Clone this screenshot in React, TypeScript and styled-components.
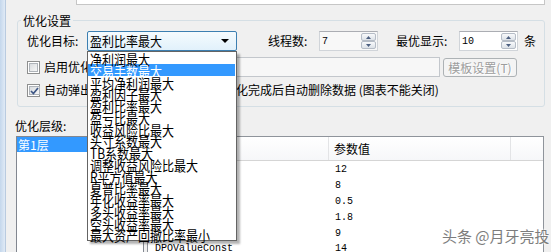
import React from 'react';
import styled, { createGlobalStyle } from 'styled-components';

const Global = createGlobalStyle`
  html, body { margin: 0; padding: 0; background: #f0f0f0; }
  body {
    font-family: "Noto Sans CJK SC", "Noto Sans", sans-serif;
    font-size: 12px;
    color: #000;
  }
  #root { width: 551px; height: 252px; }
`;

const Window = styled.div`
  position: relative;
  width: 551px;
  height: 252px;
  overflow: hidden;
  display: flex;
  background: #f0f0f0;
`;

const Edge = styled.div`
  flex: none;
  width: 6px;
  box-sizing: border-box;
  background: linear-gradient(90deg, #c4d7ec, #e0eaf6);
  border-right: 1px solid #b9cbe0;
`;

const Main = styled.div`
  flex: 1;
  min-width: 0;
  display: flex;
  flex-direction: column;
`;

const TopPane = styled.div`
  flex: none;
  margin-left: 70px;
  width: 469px;
  height: 5px;
  box-sizing: border-box;
  background: #fff;
  border: 1px solid #c6c6c6;
  border-top: none;
`;

const Group = styled.fieldset`
  flex: none;
  margin: 7px 0 0 11px;
  width: 528px;
  min-width: 0;
  box-sizing: border-box;
  border: 1px solid #d5dfe5;
  border-radius: 3px;
  padding: 2px 0 7px 9px;
`;

const Caption = styled.legend`
  margin-left: -6px;
  padding: 0 2px;
  font-size: 12px;
  line-height: 17px;
`;

const Row = styled.div<{ $mt?: number; $h?: number }>`
  display: flex;
  align-items: center;
  height: ${(p) => p.$h ?? 20}px;
  margin-top: ${(p) => p.$mt ?? 0}px;
`;

const Label = styled.span<{ $w?: number; $ml?: number }>`
  flex: none;
  ${(p) => (p.$w ? `width: ${p.$w}px;` : '')}
  margin-left: ${(p) => p.$ml ?? 0}px;
  white-space: nowrap;
  line-height: 20px;
`;

const ComboWrap = styled.div`
  position: relative;
  flex: none;
  width: 150px;
  height: 20px;
`;

const Combo = styled.div`
  height: 100%;
  box-sizing: border-box;
  border: 1px solid #3c7fb1;
  border-radius: 2px;
  background: linear-gradient(#f5fbfe, #e1f1fb);
  display: flex;
  align-items: center;
  padding-left: 2px;
  padding-right: 7px;
`;

const ComboText = styled.span`
  flex: 1;
  display: inline-block;
  line-height: 18px;
  transform: scaleY(1.08);
`;

const Arrow = styled.svg`
  flex: none;
`;

const DropList = styled.ul`
  position: absolute;
  left: 0;
  top: 20px;
  z-index: 5;
  width: 150px;
  box-sizing: border-box;
  margin: 0;
  padding: 0;
  list-style: none;
  background: #fff;
  border: 1px solid #646464;
  box-shadow: 3px 3px 2px rgba(0, 0, 0, 0.3);
`;

const DropItem = styled.li<{ $active?: boolean }>`
  height: 11.75px;
  line-height: 11.75px;
  padding-left: 2px;
  margin-right: 1px;
  white-space: nowrap;
  background: ${(p) => (p.$active ? '#3399ff' : 'transparent')};
  color: ${(p) => (p.$active ? '#fff' : '#000')};
  span {
    display: inline-block;
    transform: scaleY(1.18);
    transform-origin: 50% 0;
  }
`;

const Spin = styled.div<{ $bg: string }>`
  flex: none;
  display: flex;
  width: 59px;
  height: 20px;
  box-sizing: border-box;
  border: 1px solid #d0d4d9;
  border-top-color: #abadb3;
  background: ${(p) => p.$bg};
  padding: 1px 1px 1px 0;
`;

const SpinValue = styled.span`
  flex: 1;
  padding-left: 2px;
  font-family: "Liberation Mono", monospace;
  font-size: 10px;
  line-height: 17px;
`;

const SpinButtons = styled.div`
  flex: none;
  width: 15px;
  display: flex;
  flex-direction: column;
`;

const SpinBtn = styled.div`
  flex: 1;
  box-sizing: border-box;
  border: 1px solid #b5bcc6;
  border-radius: 2px;
  background: linear-gradient(#f8f9fb, #dde2e8);
  display: flex;
  align-items: center;
  justify-content: center;
`;

const Check = styled.span`
  flex: none;
  width: 13px;
  height: 13px;
  box-sizing: border-box;
  border: 1px solid #8e8f8f;
  background: #fff;
  padding: 1px;
  display: flex;
  margin-top: 1px;
`;

const CheckInner = styled.span`
  flex: 1;
  border: 1px solid #aeb3b9;
  background: linear-gradient(135deg, #d9dcdf, #f6f6f6);
  display: flex;
  align-items: center;
  justify-content: center;
`;

const CheckText = styled.span`
  flex: none;
  margin-left: 4px;
  white-space: nowrap;
  line-height: 18px;
`;

const TextBox = styled.div<{ $w: number; $ml: number }>`
  flex: none;
  width: ${(p) => p.$w}px;
  margin-left: ${(p) => p.$ml}px;
  height: 20px;
  box-sizing: border-box;
  border: 1px solid #c3c7cc;
  background: #f7f7f7;
`;

const DisabledButton = styled.div`
  flex: none;
  margin-left: 3px;
  width: 74px;
  height: 19px;
  box-sizing: border-box;
  border: 1px solid #adb2b5;
  border-radius: 3px;
  background: #f4f4f4;
  color: #9d9d9d;
  text-shadow: 1px 1px 0 #fff;
  display: flex;
  align-items: center;
  justify-content: center;
  white-space: nowrap;
  line-height: 17px;
`;

const LevelLabel = styled.div`
  flex: none;
  margin: 12px 0 0 9px;
  line-height: 14px;
`;

const Lists = styled.div`
  flex: 1;
  display: flex;
  margin: 3px 0 0 10px;
  min-height: 0;
`;

const ListBox = styled.div`
  flex: none;
  width: 128px;
  box-sizing: border-box;
  border: 1px solid #828790;
  border-bottom: none;
  background: #fff;
`;

const ListItem = styled.div<{ $selected?: boolean }>`
  height: 15px;
  line-height: 15px;
  padding-left: 1px;
  background: ${(p) => (p.$selected ? '#3399ff' : 'transparent')};
  color: ${(p) => (p.$selected ? '#fff' : '#000')};
`;

const Table = styled.div`
  flex: none;
  margin-left: 3px;
  width: 397px;
  box-sizing: border-box;
  border: 1px solid #8f949b;
  border-bottom: none;
  background: #fff;
  display: flex;
  flex-direction: column;
`;

const HeaderRow = styled.div`
  flex: none;
  display: flex;
  height: 24px;
  box-sizing: border-box;
  border-bottom: 1px solid #d5d5d5;
  background: linear-gradient(#ffffff, #f6f7f9);
`;

const HeadCell = styled.div<{ $w?: number }>`
  ${(p) => (p.$w ? `flex: none; width: ${p.$w}px;` : 'flex: 1;')}
  box-sizing: border-box;
  border-right: 1px solid #e3e4e6;
  padding-left: 5px;
  line-height: 23px;
  &:last-child { border-right: none; }
`;

const Body = styled.div`
  padding-top: 1px;
`;

const DataRow = styled.div`
  display: flex;
  height: 15.9px;
  line-height: 15.9px;
  font-family: "Liberation Mono", monospace;
  font-size: 10px;
`;

const DataCell = styled.div<{ $w: number; $pl: number }>`
  flex: none;
  width: ${(p) => p.$w}px;
  padding-left: ${(p) => p.$pl}px;
  box-sizing: border-box;
  white-space: nowrap;
`;

const Watermark = styled.div`
  position: absolute;
  left: 442px;
  top: 226px;
  z-index: 6;
  font-size: 15px;
  line-height: 20px;
  color: #7d7d7d;
  white-space: nowrap;
  text-shadow: 0 0 2px #fff, 0 0 2px #fff;
`;

const options = [
  '净利润最大',
  '交易手数最大',
  '平均净利润最大',
  '盈利因子最大',
  '盈利比率最大',
  '盈亏比最大',
  '收益风险比最大',
  '头寸系数最大',
  'TB系数最大',
  '调整收益风险比最大',
  'R平方值最大',
  '夏普比率最大',
  '年化收益率最大',
  '多头收益率最大',
  '空头收益率最大',
  '最大资产回撤比率最小',
];

const params = [
  { name: 'FastLength', value: '12' },
  { name: 'SlowLength', value: '8' },
  { name: 'StopLoss', value: '0.5' },
  { name: 'TakeProfit', value: '1.8' },
  { name: 'DPOLength', value: '9' },
  { name: 'DPOValueConst', value: '14' },
];

const SpinBox: React.FC<{ value: string; bg: string }> = ({ value, bg }) => (
  <Spin $bg={bg}>
    <SpinValue>{value}</SpinValue>
    <SpinButtons>
      <SpinBtn>
        <svg width="5" height="3" viewBox="0 0 5 3">
          <path d="M0 3 L2.5 0 L5 3 Z" fill="#4c5f80" />
        </svg>
      </SpinBtn>
      <SpinBtn>
        <svg width="5" height="3" viewBox="0 0 5 3">
          <path d="M0 0 L5 0 L2.5 3 Z" fill="#4c5f80" />
        </svg>
      </SpinBtn>
    </SpinButtons>
  </Spin>
);

const CheckBox: React.FC<{ checked?: boolean }> = ({ checked }) => (
  <Check>
    <CheckInner>
      {checked && (
        <svg width="9" height="8" viewBox="0 0 9 8">
          <path d="M1 4 L3.4 6.5 L8 1" stroke="#3d5685" strokeWidth="1.7" fill="none" />
        </svg>
      )}
    </CheckInner>
  </Check>
);

export default function App() {
  return (
    <Window>
      <Global />
      <Edge />
      <Main>
        <TopPane />
        <Group>
          <Caption>优化设置</Caption>
          <Row>
            <Label $w={60}>优化目标:</Label>
            <ComboWrap>
              <Combo>
                <ComboText>盈利比率最大</ComboText>
                <Arrow width="8" height="4" viewBox="0 0 8 4">
                  <path d="M0 0 L8 0 L4 4 Z" fill="#000" />
                </Arrow>
              </Combo>
              <DropList>
                {options.map((o, i) => (
                  <DropItem key={o} $active={i === 1}>
                    <span>{o}</span>
                  </DropItem>
                ))}
              </DropList>
            </ComboWrap>
            <Label $w={51} $ml={31}>线程数:</Label>
            <SpinBox value="7" bg="#f8f8f8" />
            <Label $w={63} $ml={18}>最优显示:</Label>
            <SpinBox value="10" bg="#ffffff" />
            <Label $ml={6}>条</Label>
          </Row>
          <Row $mt={6}>
            <CheckBox />
            <CheckText>启用优化模板</CheckText>
            <TextBox $w={319} $ml={5} />
            <DisabledButton>模板设置(T)</DisabledButton>
          </Row>
          <Row $mt={4} $h={18}>
            <CheckBox checked />
            <CheckText>自动弹出优化结果图表窗口，并在优化完成后自动删除数据 (图表不能关闭)</CheckText>
          </Row>
        </Group>
        <LevelLabel>优化层级:</LevelLabel>
        <Lists>
          <ListBox>
            <ListItem $selected>第1层</ListItem>
          </ListBox>
          <Table>
            <HeaderRow>
              <HeadCell $w={181}>参数名称</HeadCell>
              <HeadCell $w={182}>参数值</HeadCell>
              <HeadCell />
            </HeaderRow>
            <Body>
              {params.map((p) => (
                <DataRow key={p.name}>
                  <DataCell $w={181} $pl={7}>{p.name}</DataCell>
                  <DataCell $w={182} $pl={6}>{p.value}</DataCell>
                </DataRow>
              ))}
            </Body>
          </Table>
        </Lists>
      </Main>
      <Watermark>头条 @月牙亮投</Watermark>
    </Window>
  );
}
